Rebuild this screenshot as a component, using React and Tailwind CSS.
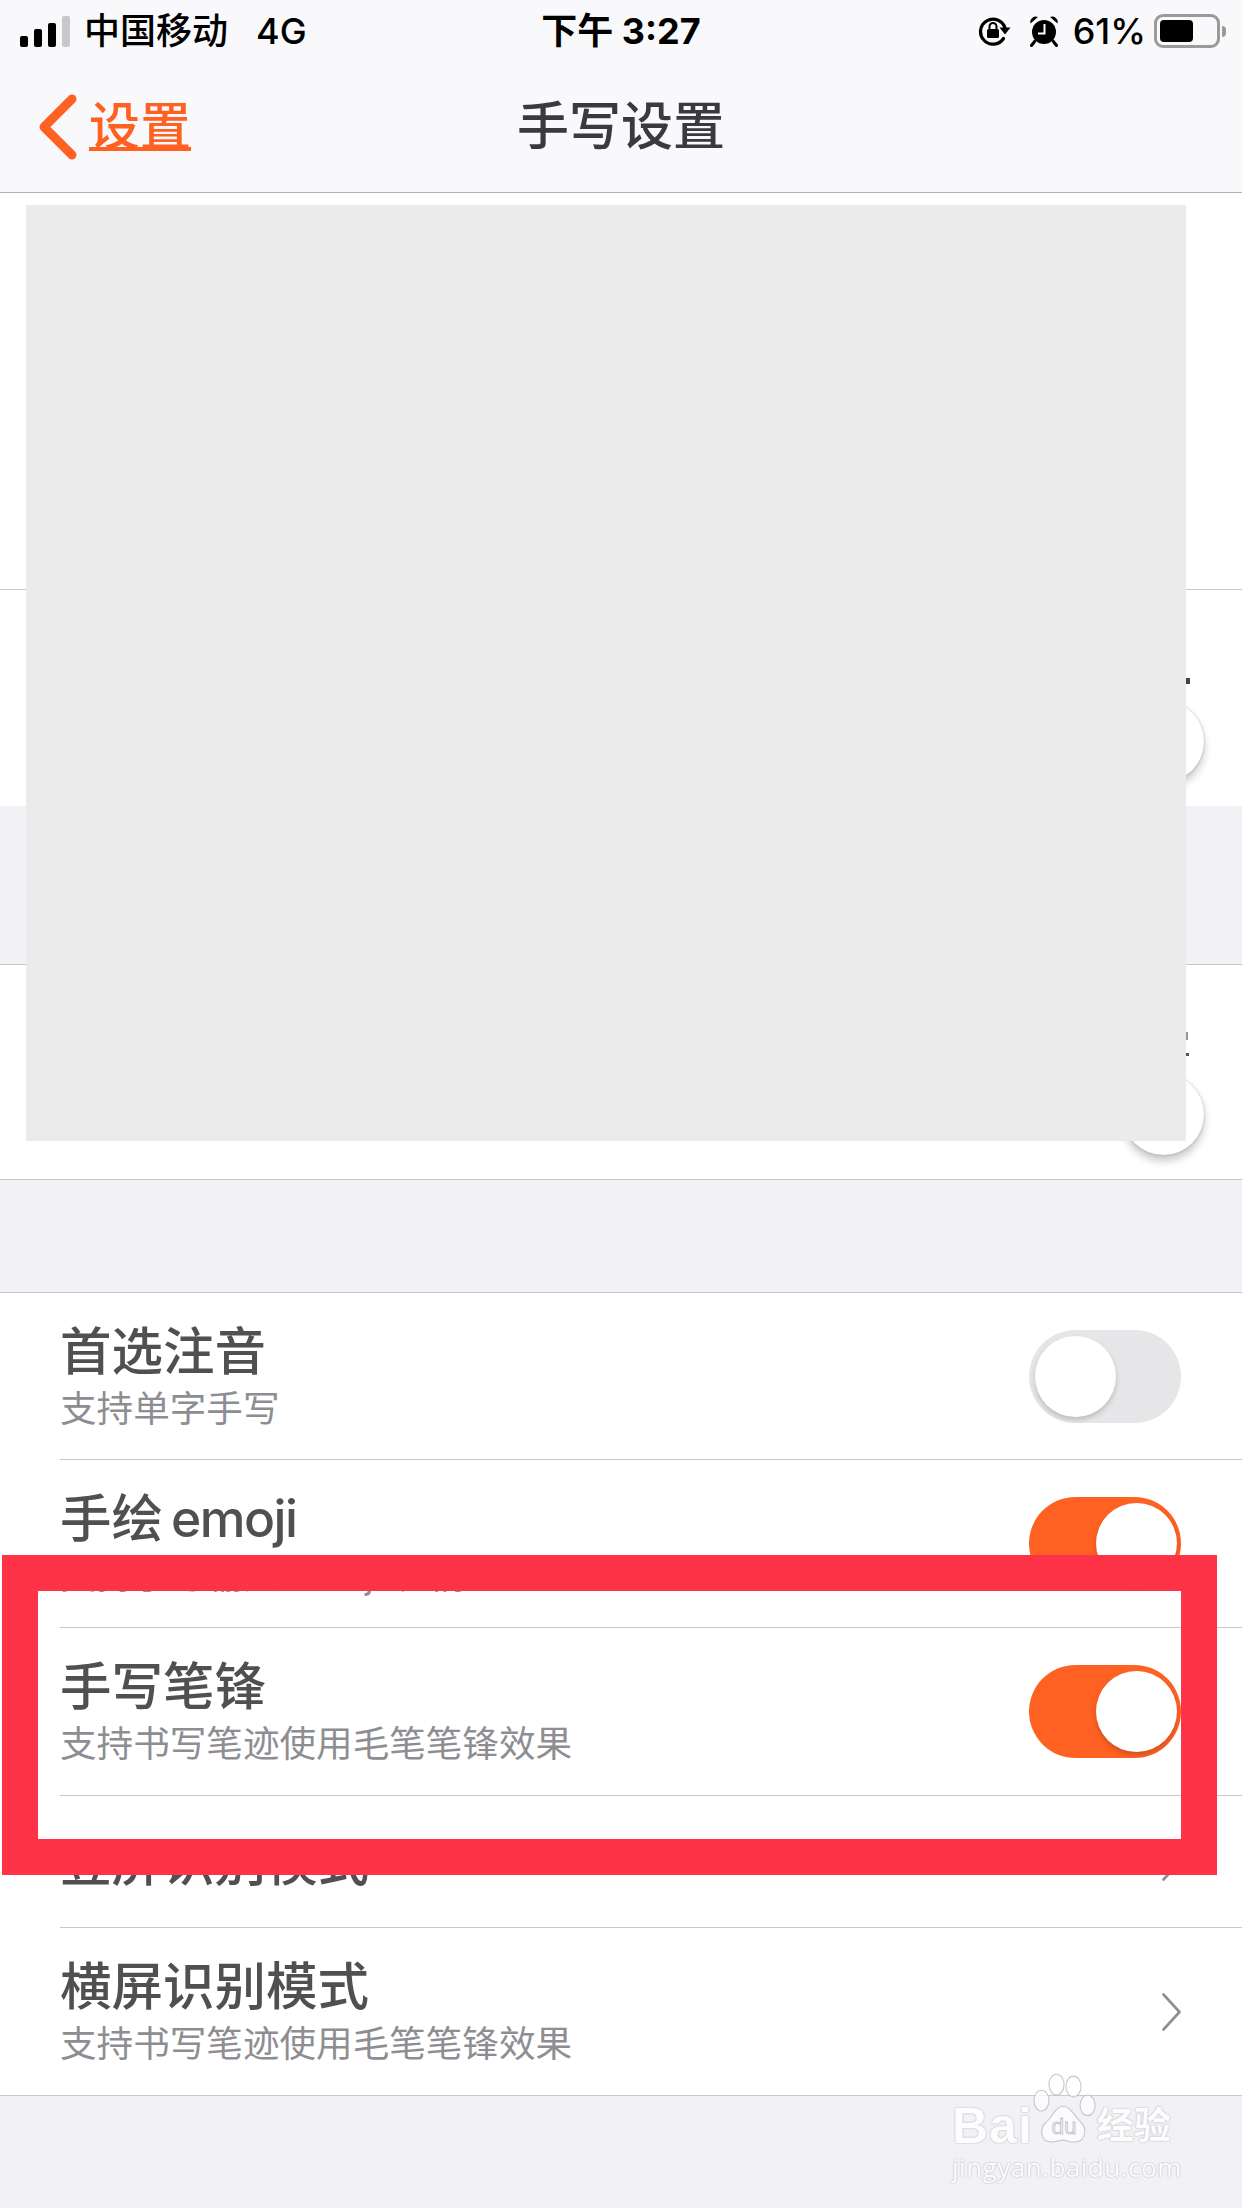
import React from 'react'

const CJK = 'font-["Inter","Noto_Sans_CJK_SC",sans-serif]'

function SignalBars() {
  return (
    <div className="flex items-end gap-[6px] h-[31px] w-[51px]">
      <div className="w-[8px] h-[11px] rounded-[2px] bg-black" />
      <div className="w-[8px] h-[18px] rounded-[2px] bg-black" />
      <div className="w-[8px] h-[24px] rounded-[2px] bg-black" />
      <div className="w-[8px] h-[31px] rounded-[2px] bg-[#c7c7cc]" />
    </div>
  )
}

function RotationLock() {
  return (
    <svg width="34" height="30" viewBox="0 0 34 30" fill="none">
      <path d="M25.5 22.5A12.5 12.5 0 1 1 27 12" stroke="black" strokeWidth="3.2" strokeLinecap="round" />
      <path d="M21.5 11.5h11l-5.5 7z" fill="black" />
      <rect x="9" y="13" width="12" height="9" rx="1.5" fill="black" />
      <path d="M11.5 13v-2.5a3.5 3.5 0 0 1 7 0V13" stroke="black" strokeWidth="2" />
    </svg>
  )
}

function AlarmClock() {
  return (
    <svg width="30" height="32" viewBox="0 0 30 32">
      <circle cx="15" cy="17" r="12" fill="black" />
      <path d="M1.5 8.5a5.5 5.5 0 0 1 7.5-6.5z M28.5 8.5a5.5 5.5 0 0 0-7.5-6.5z" fill="black" />
      <path d="M6 26l-3.5 4.5M24 26l3.5 4.5" stroke="black" strokeWidth="3" strokeLinecap="round" />
      <path d="M15.5 9v9.5H9" stroke="white" strokeWidth="2" fill="none" />
    </svg>
  )
}

function Battery() {
  return (
    <div className="flex items-center gap-[2px]">
      <div className="w-[66px] h-[34px] rounded-[9px] border-[3px] border-[#9a9a9a] p-[3px]">
        <div className="w-[33px] h-full rounded-[4px] bg-black" />
      </div>
      <div className="w-[4px] h-[11px] rounded-r-full bg-[#9a9a9a]" />
    </div>
  )
}

function Toggle({ on }) {
  return (
    <div className={`flex w-[152px] h-[93px] shrink-0 rounded-full p-[6px] ${on ? 'justify-end pr-[4px] bg-[#ff6123]' : 'justify-start bg-[#e6e6e9]'}`}>
      <div className="w-[81px] h-[81px] rounded-full bg-white shadow-[0_3px_5px_rgba(0,0,0,0.18)]" />
    </div>
  )
}

function Chevron() {
  return (
    <svg width="19" height="38" viewBox="0 0 19 38" fill="none">
      <path d="M1.5 1.5 17.5 19 1.5 36.5" stroke="#8e8e93" strokeWidth="2.6" strokeLinecap="round" strokeLinejoin="round" />
    </svg>
  )
}

function Row({ title, sub, right, height, last }) {
  return (
    <div className={`flex items-center justify-between ml-[60px] pr-[61px] ${height} ${last ? '' : 'border-b border-[#c8c8cb]'}`}>
      <div>
        <div className="text-[51.5px] leading-[60px] font-medium text-[#505052]">{title}</div>
        {sub && <div className="mt-[5px] text-[36.6px] leading-[46px] text-[#8e8e92]">{sub}</div>}
      </div>
      {right}
    </div>
  )
}

function HiddenKnob({ height }) {
  return (
    <div className={`flex items-end justify-end pr-[38px] pb-[24px] ${height}`}>
      <div className="w-[81px] h-[81px] rounded-full bg-white shadow-[0_6px_8px_rgba(0,0,0,0.22),0_0_3px_rgba(0,0,0,0.2)]" />
    </div>
  )
}

function Watermark() {
  const outlined = '[text-shadow:0_0_2px_#b9b9bd,0_0_1px_#b9b9bd] text-white'
  return (
    <div className="absolute left-[952px] top-[2072px] w-[226px] opacity-90">
      <div className="flex items-end h-[76px]">
        <span className={`${outlined} font-["Liberation_Sans",sans-serif] font-bold text-[50px] leading-[44px] tracking-[1px]`}>Bai</span>
        <svg width="64" height="76" viewBox="0 0 68 76" className="shrink-0">
          <g fill="#ffffff" fillOpacity="0.85" stroke="#c4c4c8" strokeWidth="1.2">
            <ellipse cx="9" cy="28" rx="8" ry="11" />
            <ellipse cx="25" cy="11" rx="8" ry="11" />
            <ellipse cx="43" cy="13" rx="8" ry="11" />
            <ellipse cx="58" cy="33" rx="8" ry="11" />
            <path d="M32 34c8 0 11 10 19 17 7 7 5 22-8 21-6 0-7-2-11-2s-6 2-12 2C8 72 6 58 14 51c7-6 10-17 18-17z" />
          </g>
          <text x="33" y="64" textAnchor="middle" fontSize="24" fontFamily="Liberation Sans" fill="#eeeef2" stroke="#bdbdc2" strokeWidth="0.8">du</text>
        </svg>
        <span className={`${outlined} text-[37px] leading-[44px] font-bold`}>经验</span>
      </div>
      <div className={`${outlined} mt-[3px] text-[26px] leading-[32px] font-["Open_Sans",sans-serif] tracking-[0.5px] whitespace-nowrap`}>jingyan.baidu.com</div>
    </div>
  )
}

export default function App() {
  return (
    <div className={`relative w-[1242px] h-[2208px] overflow-hidden bg-[#f1f1f6] ${CJK}`}>
      <header className="h-[193px] bg-[#f9f9fb] border-b border-[#b2b2b2]">
        <div className="grid grid-cols-[1fr_auto_1fr] items-center h-[62px] text-[36px] leading-[44px] text-black">
          <div className="flex items-center pl-[20px] font-medium">
            <SignalBars />
            <span className="ml-[13px]">中国移动</span>
            <span className="ml-[28px]">4G</span>
          </div>
          <div className="font-bold">下午 3:27</div>
          <div className="flex items-center justify-end gap-[8px] pr-[16px]">
            <div className="flex items-center">
              <RotationLock />
              <div className="ml-[17px]"><AlarmClock /></div>
              <span className="ml-[14px] text-[36px] font-medium">61%</span>
            </div>
            <Battery />
          </div>
        </div>
        <div className="grid grid-cols-[1fr_auto_1fr] items-center h-[130px]">
          <div className="flex items-center pl-[38px] gap-[11px] text-[#ff6123]">
            <svg width="40" height="66" viewBox="0 0 40 66" fill="none">
              <path d="M34 5 6 33l28 28" stroke="#ff6123" strokeWidth="9" strokeLinecap="round" strokeLinejoin="round" />
            </svg>
            <span className="text-[51px] leading-[60px] font-medium underline decoration-[4px] underline-offset-[2px]">设置</span>
          </div>
          <div className="text-[52px] leading-[60px] font-medium text-[#3a3a3c]">手写设置</div>
          <div />
        </div>
      </header>

      <section className="bg-white">
        <div className="h-[397px] border-b border-[#c8c8cb]" />
        <HiddenKnob height="h-[216px]" />
      </section>

      <section className="mt-[158px] bg-white border-y border-[#c8c8cb]">
        <HiddenKnob height="h-[214px]" />
      </section>

      <section className="mt-[112px] bg-white border-y border-[#c8c8cb]">
        <Row height="h-[167px]" title="首选注音" sub="支持单字手写" right={<Toggle />} />
        <Row
          height="h-[168px]"
          title={<>手绘<span className="ml-[8px] tracking-[-1.5px]">emoji</span></>}
          sub="支持手写输入 emoji 表情"
          right={<Toggle on />}
        />
        <Row height="h-[168px]" title="手写笔锋" sub="支持书写笔迹使用毛笔笔锋效果" right={<Toggle on />} />
        <Row height="h-[132px]" title="竖屏识别模式" right={<Chevron />} />
        <Row height="h-[167px]" last title="横屏识别模式" sub="支持书写笔迹使用毛笔笔锋效果" right={<Chevron />} />
      </section>

      {/* grey block pasted over the first rows */}
      <div className="absolute left-[26px] top-[205px] w-[1160px] h-[936px] bg-[#ebebeb]" />
      {/* cut off text showing beside the block */}
      <div className="absolute left-[1186px] top-[678px] w-[4px] h-[6px] bg-[#444]" />
      <div className="absolute left-[1186px] top-[1032px] w-[2px] h-[8px] bg-[#999]" />
      <div className="absolute left-[1186px] top-[1053px] w-[3px] h-[3px] bg-[#555]" />

      {/* red highlight frame, with the white patch under the pasted row */}
      <div className="absolute left-[2px] top-[1555px] w-[1215px] h-[320px] border-[36px] border-[#ff3347]" />
      <div className="absolute left-[38px] top-[1796px] w-[1143px] h-[43px] bg-white" />

      <Watermark />
    </div>
  )
}
